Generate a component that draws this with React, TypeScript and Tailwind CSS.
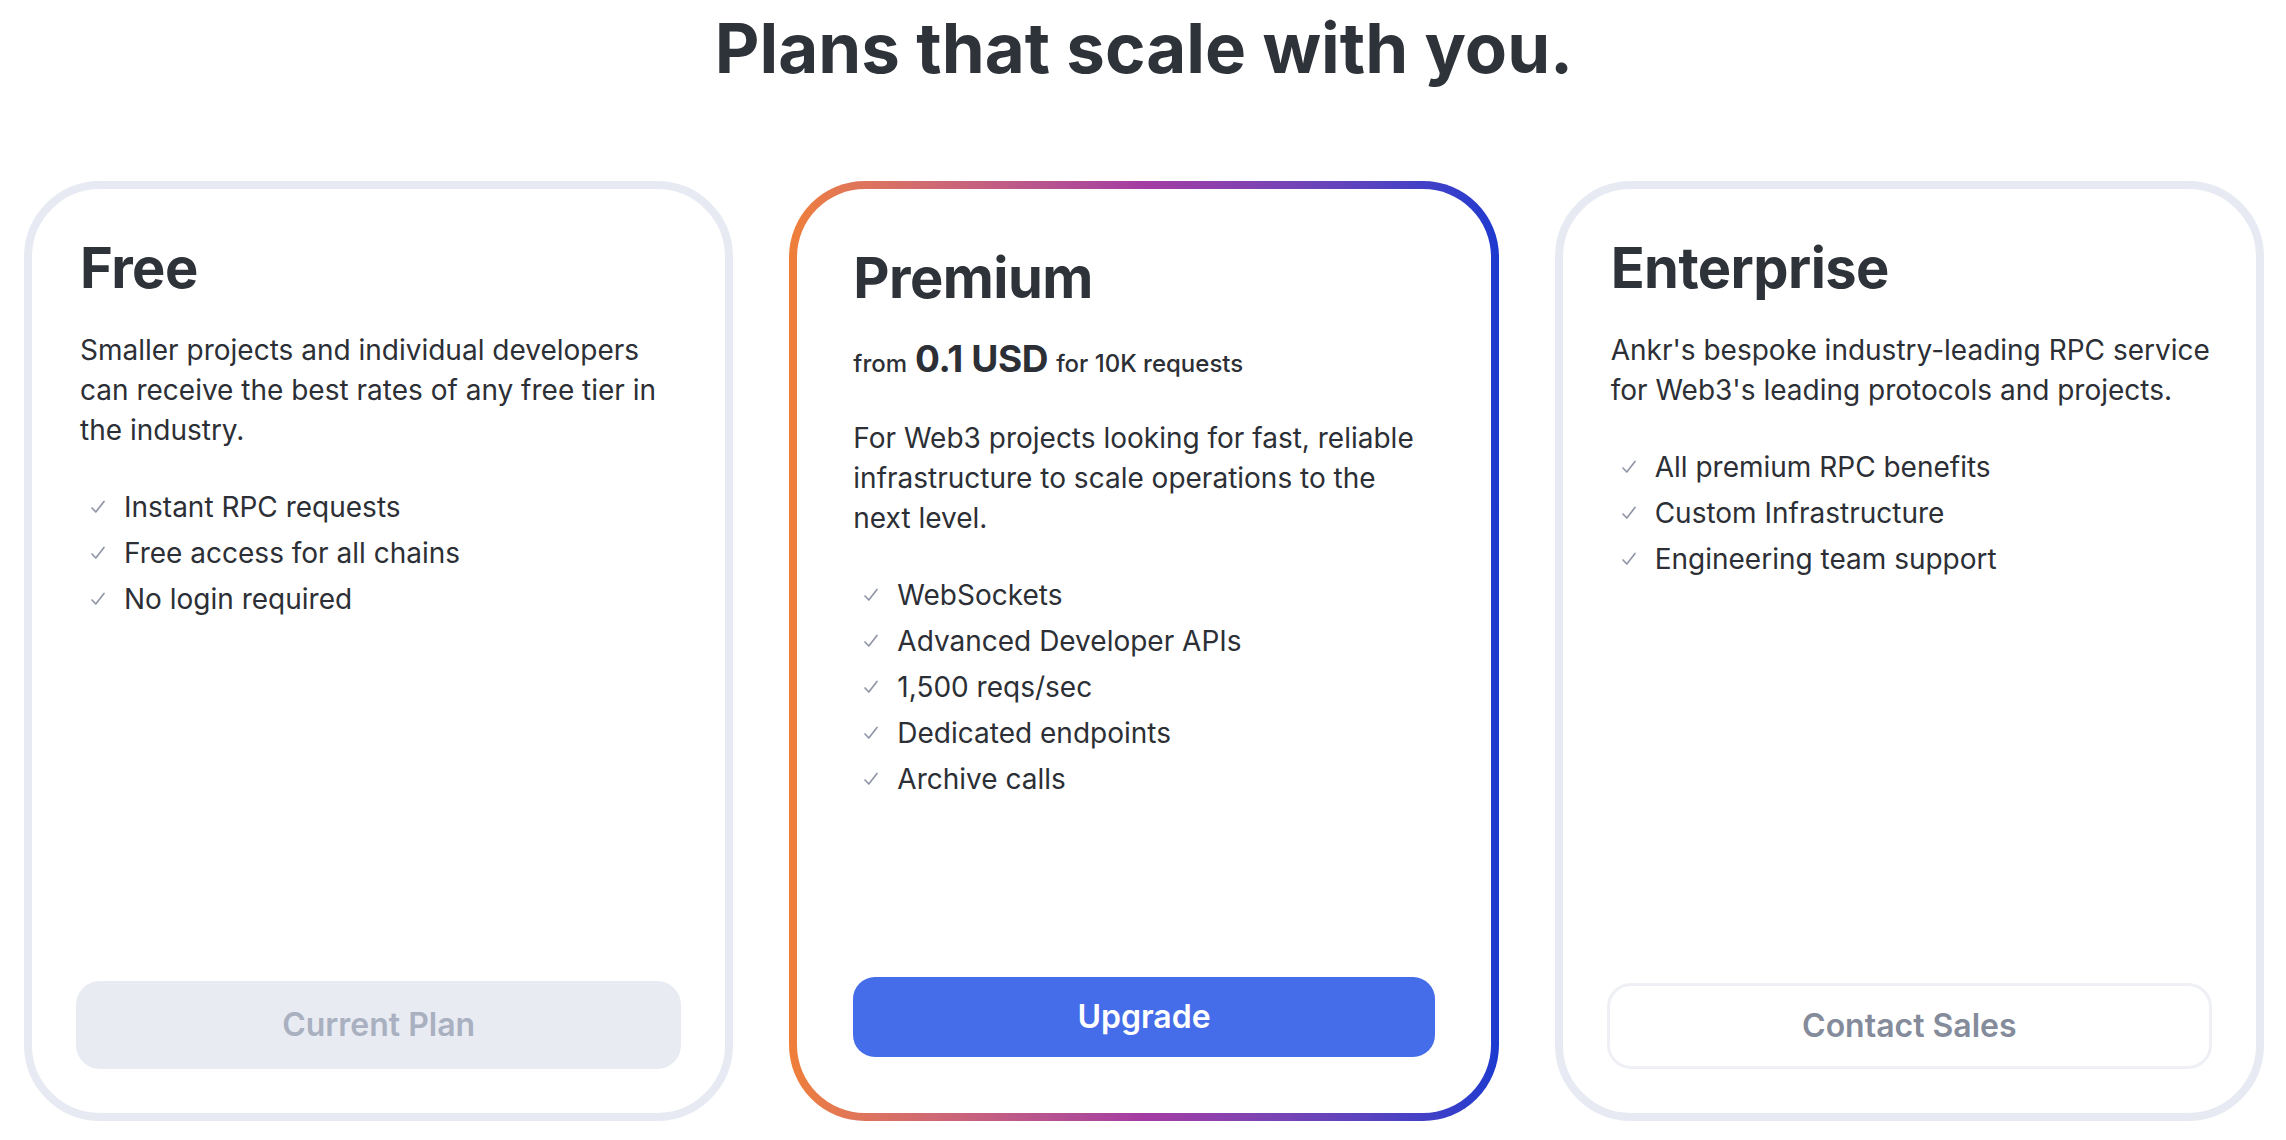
import React from 'react';

type Plan = {
  name: string;
  desc: string[];
  features: string[];
  cta: string;
  variant: 'current' | 'primary' | 'outline';
};

const plans: Plan[] = [
  {
    name: 'Free',
    desc: [
      'Smaller projects and individual developers',
      'can receive the best rates of any free tier in',
      'the industry.',
    ],
    features: ['Instant RPC requests', 'Free access for all chains', 'No login required'],
    cta: 'Current Plan',
    variant: 'current',
  },
  {
    name: 'Premium',
    desc: [
      'For Web3 projects looking for fast, reliable',
      'infrastructure to scale operations to the',
      'next level.',
    ],
    features: [
      'WebSockets',
      'Advanced Developer APIs',
      '1,500 reqs/sec',
      'Dedicated endpoints',
      'Archive calls',
    ],
    cta: 'Upgrade',
    variant: 'primary',
  },
  {
    name: 'Enterprise',
    desc: [
      "Ankr's bespoke industry-leading RPC service",
      "for Web3's leading protocols and projects.",
    ],
    features: ['All premium RPC benefits', 'Custom Infrastructure', 'Engineering team support'],
    cta: 'Contact Sales',
    variant: 'outline',
  },
];

function CheckIcon() {
  return (
    <svg
      viewBox="0 0 20 20"
      className="w-5 h-5 ml-[8px] shrink-0 text-[#9197a8]"
      fill="none"
      stroke="currentColor"
      strokeWidth={1.7}
      strokeLinecap="round"
      strokeLinejoin="round"
    >
      <path d="M4 11 7.8 15 16 4.5" />
    </svg>
  );
}

function FeatureList({ items }: { items: string[] }) {
  return (
    <ul className="flex flex-col gap-[6px]">
      {items.map((item) => (
        <li key={item} className="flex items-center text-[28px] leading-[40px] text-[#2c2f35]">
          <CheckIcon />
          <span className="ml-[16px]">{item}</span>
        </li>
      ))}
    </ul>
  );
}

function CardBody({ plan }: { plan: Plan }) {
  const isPremium = plan.variant === 'primary';
  return (
    <div className="flex flex-col h-full">
      <div className={isPremium ? '' : 'pl-1'}>
        <h2 className="text-[56px] leading-[66px] font-bold text-[#2e3239] tracking-[-0.01em]">
          {plan.name}
        </h2>

        {isPremium && (
          <p className="mt-[28px] flex items-baseline gap-[8px] leading-[40px] text-[#2c2f35]">
            <span className="text-[24px] font-medium">from</span>
            <span className="text-[37px] font-bold tracking-[-0.01em]">0.1 USD</span>
            <span className="text-[24px] font-medium">for 10K requests</span>
          </p>
        )}

        <p
          className={
            isPremium
              ? 'mt-[34px] text-[28px] leading-[40px] text-[#2c2f35]'
              : 'mt-[29px] text-[28px] leading-[40px] text-[#2c2f35]'
          }
        >
          {plan.desc.map((line, i) => (
            <React.Fragment key={i}>
              {line}
              {i < plan.desc.length - 1 && <br />}
            </React.Fragment>
          ))}
        </p>

        <div className="mt-[37px]">
          <FeatureList items={plan.features} />
        </div>
      </div>

      <div className="mt-auto">
        {plan.variant === 'current' && (
          <button className="w-full h-[88px] rounded-[24px] bg-[#e8ebf2] text-[32px] font-semibold text-[#a9b0c0]">
            {plan.cta}
          </button>
        )}
        {plan.variant === 'primary' && (
          <button className="w-full h-[80px] rounded-[22px] bg-[#456de9] text-[32px] font-semibold text-white">
            {plan.cta}
          </button>
        )}
        {plan.variant === 'outline' && (
          <button className="w-full h-[86px] rounded-[24px] border-[3px] border-[#eef0f5] bg-white text-[32px] font-semibold text-[#848b9b]">
            {plan.cta}
          </button>
        )}
      </div>
    </div>
  );
}

export default function App() {
  return (
    <div
      className="min-h-screen bg-white pt-[7px] pl-6 pr-[22px]"
      style={{ fontFamily: 'Inter, "Noto Sans", Roboto, sans-serif' }}
    >
      <h1 className="text-center text-[69px] leading-[82px] font-bold text-[#2e3239]">
        Plans that scale with you.
      </h1>

      <div className="mt-[92px] grid grid-cols-3 gap-14 h-[940px]">
        {plans.map((plan) =>
          plan.variant === 'primary' ? (
            <div
              key={plan.name}
              className="rounded-[76px] p-2 bg-linear-to-r from-[#ef7f37] via-[#a43ba3] to-[#1b3acf]"
            >
              <div className="h-full rounded-[68px] bg-white p-14">
                <CardBody plan={plan} />
              </div>
            </div>
          ) : (
            <div
              key={plan.name}
              className="rounded-[76px] border-8 border-[#e7eaf2] bg-white pt-[46px] px-11 pb-11"
            >
              <CardBody plan={plan} />
            </div>
          )
        )}
      </div>
    </div>
  );
}
